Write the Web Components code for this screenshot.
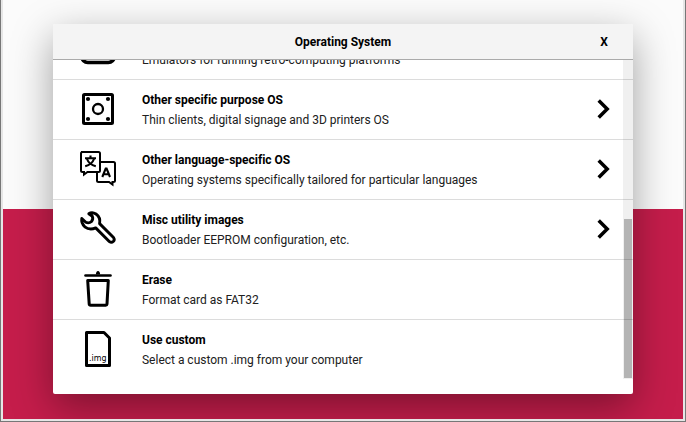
<!DOCTYPE html>
<html lang="en">
<head>
<meta charset="utf-8">
<title>Operating System</title>
<style>
html,body{margin:0;height:100%;overflow:hidden}
body{font-family:Roboto,sans-serif;font-size:12px;color:#000}
</style>
</head>
<body>
<app-window>
  <os-popup heading="Operating System">
    <os-item><svg slot="icon" viewBox="0 0 44 60" fill="none" stroke="#000" stroke-width="3.600"><rect x="5.800" y="21" width="32.500" height="21.500" rx="6"/></svg><span slot="name">Emulation and game OS</span>Emulators for running retro-computing platforms</os-item>
    <os-item more><svg slot="icon" viewBox="0 0 44 60" fill="none" stroke="#000"><rect x="7.500" y="14.500" width="29" height="29" rx="1" stroke-width="3"/><circle cx="22" cy="29" r="5" stroke-width="2.300"/><g fill="#000" stroke="none"><circle cx="12" cy="19" r="2.100"/><circle cx="32" cy="19" r="2.100"/><circle cx="12" cy="39" r="2.100"/><circle cx="32" cy="39" r="2.100"/></g></svg><span slot="name">Other specific purpose OS</span>Thin clients, digital signage and 3D printers OS</os-item>
    <os-item more><svg slot="icon" viewBox="0 0 44 60" fill="none" stroke="#000" stroke-width="2"><path d="M5 12H22.500Q24 12 24 13.500V30.500Q24 32 22.500 32H11.500L8 34.500V32H6.500Q5 32 5 30.500V13.500Q5 12 6.500 12"/><path d="M24 22H37.500Q39 22 39 23.500V41Q39 42 37.500 42H36.500V44.500L33 42H22.500Q21 42 21 40.500V32"/><path d="M9 18.300H20M14.500 15.500V18.500M11 19Q13 24.500 19.800 26.300M18 19Q16 24.500 9.200 26.300" stroke-width="2.100"/><path d="M26.300 37 29.700 28.500H30.600L34 37M27.500 34.300H32.800" stroke-width="2.100"/></svg><span slot="name">Other language-specific OS</span>Operating systems specifically tailored for particular languages</os-item>
    <os-item more><svg slot="icon" viewBox="0 0 44 60" fill="none" stroke="#000" stroke-width="2.900" stroke-linejoin="round" stroke-linecap="round"><path d="M5.800 18.500 9.800 22.300Q13 23.800 15.500 21.500Q17.500 19 16.300 16.300L12.800 13.800Q16 11.500 20 14Q24.800 17.500 23.600 23.600L37.500 37.500Q39 39.500 37.500 41.300Q35.500 43.200 33.500 41.700L19.700 27.900Q13.500 30.500 8.800 26.800Q5 23 5.800 18.500Z"/></svg><span slot="name">Misc utility images</span>Bootloader EEPROM configuration, etc.</os-item>
    <os-item><svg slot="icon" viewBox="0 0 44 60" fill="none" stroke="#000" stroke-width="3" stroke-linejoin="round" stroke-linecap="round"><path d="M9.500 15.500H34.500" stroke-width="2.600"/><path d="M19.900 14.500Q20 11 22 11T24.100 14.500Z" fill="#000" stroke="none"/><path d="M11.700 20.500H32.300L31 44.200Q30.900 45.300 29.700 45.300H14.700Q13.300 45.300 13.200 44.200Z"/></svg><span slot="name">Erase</span>Format card as FAT32</os-item>
    <os-item><svg slot="icon" viewBox="0 0 44 60"><path d="M10.500 12.500H28L33.500 18V45.500H10.500Z" fill="none" stroke="#000" stroke-width="3" stroke-linejoin="round"/><text x="13" y="41" font-family="DejaVu Sans,sans-serif" font-size="9" textLength="17.500" lengthAdjust="spacingAndGlyphs">.img</text></svg><span slot="name">Use custom</span>Select a custom .img from your computer</os-item>
  </os-popup>
</app-window>
<script>
class AppWindow extends HTMLElement{
  constructor(){super();this.attachShadow({mode:'open'}).innerHTML=`<style>
:host{display:flex;box-sizing:border-box;width:686px;height:422px;border:1px solid #777;border-top:0}
.frame{flex:1;display:flex;border:2px solid #e6e6e6;border-top:0}
.page{flex:1;overflow:hidden;padding:24px 50px 0;background:linear-gradient(#fbfbfb 209px,#c51d4b 209px)}
</style><div class="frame"><div class="page"><slot></slot></div></div>`}
}
class OsPopup extends HTMLElement{
  constructor(){super();this.attachShadow({mode:'open'}).innerHTML=`<style>
:host{display:flex;flex-direction:column;width:580px;height:370px;background:#fff;border-radius:2px;box-shadow:0 13px 40px rgba(0,0,0,.37)}
header{display:grid;grid-template-columns:58px 1fr 58px;align-items:center;height:35px;background:#f4f4f4;border-bottom:1px solid #aaa;font-weight:700;text-align:center;border-radius:2px 2px 0 0}
.list{display:grid;grid-template-columns:1fr;height:319px;overflow:hidden}
.items,.bar{grid-area:1/1}
.items{display:flex;flex-direction:column;justify-content:flex-end;height:319px}
.bar{justify-self:end;width:10px;box-sizing:border-box;padding:159px 1px 1px;background:rgba(0,0,0,.06);display:flex;z-index:1}
.thumb{flex:1;background:rgba(0,0,0,.25)}
</style><header><span></span><span class="h"></span><span>X</span></header><div class="list"><div class="items"><slot></slot></div><div class="bar"><div class="thumb"></div></div></div>`}
  connectedCallback(){this.shadowRoot.querySelector('.h').textContent=this.getAttribute('heading')}
}
class OsItem extends HTMLElement{
  constructor(){super();this.attachShadow({mode:'open'}).innerHTML=`<style>
:host{display:flex;flex:none;box-sizing:border-box;height:60px;padding-left:23px;border-bottom:1px solid #dcdcdc}
:host(:last-child){height:59px;border-bottom:0}
.icon{width:44px;margin-right:22px}
::slotted(svg){display:block;width:44px;height:60px}
.text{flex:1;padding-top:10px;line-height:20px;white-space:nowrap;color:#202020;letter-spacing:-.01px}
.name{font-weight:700;color:#000}
.arrow{display:none;width:14px;height:20px;margin:19px 22px 0 0}
:host([more]) .arrow{display:block}
</style><div class="icon"><slot name="icon"></slot></div><div class="text"><div class="name"><slot name="name"></slot></div><div><slot></slot></div></div><svg class="arrow" viewBox="0 0 14 20"><path d="M1.700 1.500 10.200 10 1.700 18.500" fill="none" stroke="#000" stroke-width="3.500"/></svg>`}
}
customElements.define('app-window',AppWindow);
customElements.define('os-popup',OsPopup);
customElements.define('os-item',OsItem);
</script>
</body>
</html>
